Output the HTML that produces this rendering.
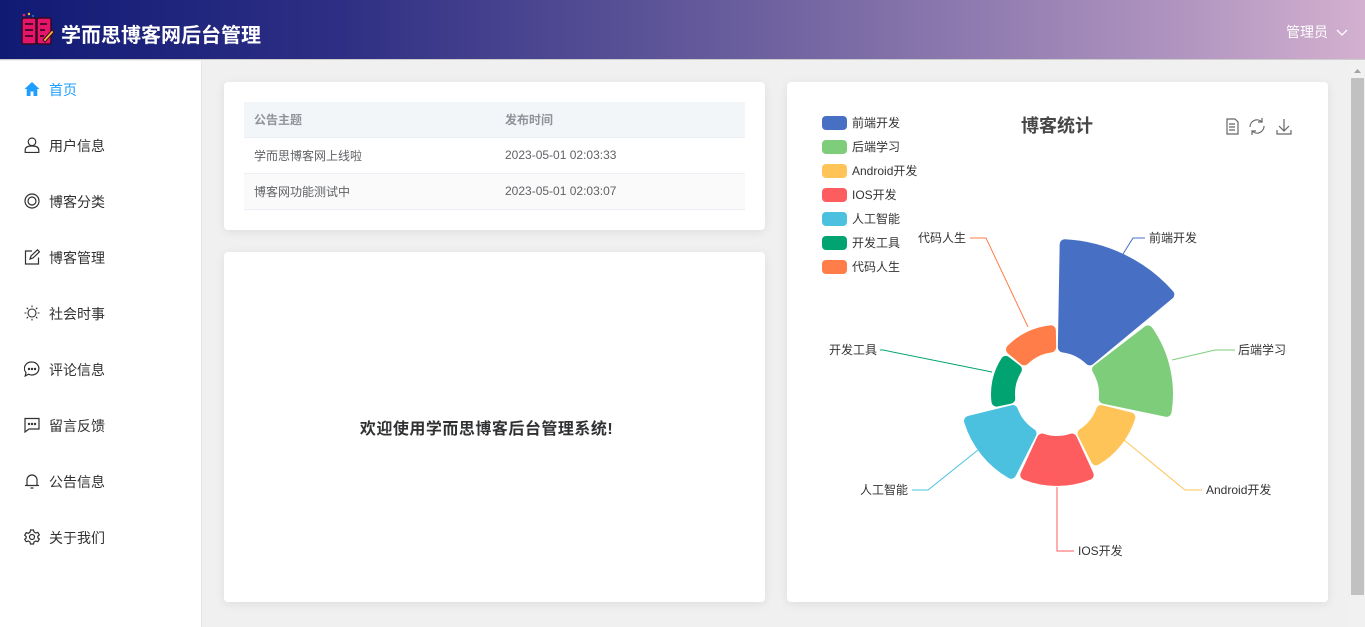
<!DOCTYPE html>
<html><head><meta charset="utf-8"><style>
*{margin:0;padding:0;box-sizing:border-box}
body{width:1365px;height:627px;overflow:hidden;background:#f0f0f0;font-family:"Liberation Sans","Noto Sans CJK SC",sans-serif;position:relative}
.hdr{position:absolute;left:0;top:0;width:1365px;height:60px;background:linear-gradient(90deg,#101a74 0%,#2e2f84 25%,#6b5f9e 55%,#ad92be 85%,#d3b0cf 100%);border-bottom:1px solid #ccc}
.title{position:absolute;left:61px;top:19px;color:#fff;font-size:20px;font-weight:bold;letter-spacing:0}
.admin{position:absolute;left:1286px;top:22px;color:#fff;font-size:14px}
.side{position:absolute;left:0;top:61px;width:202px;height:566px;background:#fff;border-right:1px solid #e6e6e6}
.it{position:absolute;left:0;width:202px;height:20px;font-size:14px;color:#303133}
.it svg{position:absolute;left:24px;top:1px}
.it span{position:absolute;left:49px;top:0px}
.card{position:absolute;background:#fff;border-radius:4px;box-shadow:0 2px 10px rgba(0,0,0,.08)}
table{position:absolute;left:20px;top:20px;width:501px;border-collapse:collapse;font-size:12px;color:#606266}
td,th{height:36px;padding-left:10px;text-align:left;border-bottom:1px solid #ebeef5;font-weight:normal}
th{background:#f3f6f9;color:#909399;height:35px;font-weight:bold}
.sb{position:absolute;left:1350px;top:61px;width:15px;height:566px;background:#f1f1f1}
.sb div{position:absolute;left:1px;top:17px;width:13px;height:517px;background:#c1c1c1}
</style></head><body>
<div class="hdr">
<svg style="position:absolute;left:20px;top:12px" width="36" height="36" viewBox="0 0 36 36">
<circle cx="4" cy="3" r="1.3" fill="#e91e63"/><circle cx="9" cy="2" r="1.2" fill="#fbc02d"/><circle cx="13" cy="4" r="1.2" fill="#1565c0"/>
<rect x="2" y="6" width="14" height="26" rx="2" fill="#e5156b" stroke="#3a0a20" stroke-width="1.5"/>
<rect x="17" y="6" width="14" height="26" rx="2" fill="#e5156b" stroke="#3a0a20" stroke-width="1.5"/>
<path d="M5 12h8M5 18h8M5 24h8M20 12h7M20 18h5M20 24h4" stroke="#3a0a20" stroke-width="1.8"/>
<path d="M23 28l9-10 2 2-9 10z" fill="#f6b73c" stroke="#3a0a20" stroke-width="1"/></svg>
<div class="title">学而思博客网后台管理</div>
<div class="admin">管理员 <svg width="12" height="8" viewBox="0 0 12 8" style="margin-left:4px"><path d="M1 1l5 5 5-5" fill="none" stroke="#fff" stroke-width="1.3"/></svg></div>
</div>
<div class="side">
<div class="it" style="top:19px;color:#1e9fff"><svg width="16" height="16" viewBox="0 0 16 16"><path d="M8 1L0.5 8h2.2v7h3.8v-4.5h3v4.5h3.8V8h2.2z" fill="#1e9fff"/></svg><span>首页</span></div>
<div class="it" style="top:75px"><svg width="16" height="16" viewBox="0 0 16 16" fill="none" stroke="#303133" stroke-width="1.2"><circle cx="8" cy="4.8" r="3.8"/><path d="M1.2 15.5v-2.5c0-2.5 2.5-4 6.8-4s6.8 1.5 6.8 4v2.5z"/></svg><span>用户信息</span></div>
<div class="it" style="top:131px"><svg width="16" height="16" viewBox="0 0 16 16" fill="none" stroke="#303133" stroke-width="1.2"><circle cx="8" cy="8" r="7"/><circle cx="8" cy="8" r="4"/></svg><span>博客分类</span></div>
<div class="it" style="top:187px"><svg width="16" height="16" viewBox="0 0 16 16" fill="none" stroke="#303133" stroke-width="1.2"><path d="M8 2H1.5v13h13V8.5"/><path d="M6 10l1-3 6.5-6.2 2 2L9 9z"/></svg><span>博客管理</span></div>
<div class="it" style="top:243px"><svg width="16" height="16" viewBox="0 0 16 16" fill="none" stroke="#303133" stroke-width="1.1"><circle cx="8" cy="8" r="4"/><path d="M8 0.5v1.8M8 13.7v1.8M0.5 8h1.8M13.7 8h1.8M2.7 2.7l1.3 1.3M12 12l1.3 1.3M2.7 13.3L4 12M12 4l1.3-1.3"/></svg><span>社会时事</span></div>
<div class="it" style="top:299px"><svg width="16" height="16" viewBox="0 0 16 16" fill="none" stroke="#303133" stroke-width="1.2"><path d="M8 1a7 6.5 0 1 1-3.5 12.2L1.2 15l0.8-3.4A7 6.5 0 0 1 8 1z"/><circle cx="5" cy="8" r=".6" fill="#303133"/><circle cx="8" cy="8" r=".6" fill="#303133"/><circle cx="11" cy="8" r=".6" fill="#303133"/></svg><span>评论信息</span></div>
<div class="it" style="top:355px"><svg width="16" height="16" viewBox="0 0 16 16" fill="none" stroke="#303133" stroke-width="1.2"><path d="M1 1.5h14v10.5H5l-4 3z"/><circle cx="5" cy="7" r=".6" fill="#303133"/><circle cx="8" cy="7" r=".6" fill="#303133"/><circle cx="11" cy="7" r=".6" fill="#303133"/></svg><span>留言反馈</span></div>
<div class="it" style="top:411px"><svg width="16" height="16" viewBox="0 0 16 16" fill="none" stroke="#303133" stroke-width="1.2"><path d="M3 12.5V7a5 5 0 0 1 10 0v5.5zM1 12.5h14M6.5 15h3"/></svg><span>公告信息</span></div>
<div class="it" style="top:467px"><svg width="16" height="16" viewBox="0 0 16 16" fill="none" stroke="#303133" stroke-width="1.2"><path d="M6.5 1h3l.5 2 1.8 1 2-.7 1.5 2.6-1.5 1.4v1.4l1.5 1.4-1.5 2.6-2-.7-1.8 1-.5 2h-3l-.5-2-1.8-1-2 .7L.7 10.4l1.5-1.4V7.6L.7 6.2l1.5-2.6 2 .7 1.8-1z"/><circle cx="8" cy="8" r="2.5"/></svg><span>关于我们</span></div>
</div>

<div class="card" style="left:224px;top:82px;width:541px;height:148px">
<table><tr><th>公告主题</th><th style="width:250px">发布时间</th></tr>
<tr><td>学而思博客网上线啦</td><td>2023-05-01 02:03:33</td></tr>
<tr style="background:#fafafa"><td>博客网功能测试中</td><td>2023-05-01 02:03:07</td></tr></table>
</div>
<div class="card" style="left:224px;top:252px;width:541px;height:350px">
<div style="position:absolute;left:-8px;width:541px;top:163px;text-align:center;font-size:16px;font-weight:bold;color:#303133;letter-spacing:0.5px">欢迎使用学而思博客后台管理系统!</div>
</div>
<div class="card" style="left:787px;top:82px;width:541px;height:520px"></div>

<svg id="ch" style="position:absolute;left:0;top:0" width="1365" height="627" font-family="Liberation Sans, Noto Sans CJK SC, sans-serif" font-size="12">
<text x="1057" y="132" text-anchor="middle" font-size="18" font-weight="bold" fill="#464646">博客统计</text>
<g fill="none" stroke="#666" stroke-width="1.2">
<path d="M1227 119h8l3 3v12h-11z M1229 124h6M1229 127h6M1229 130h6"/>
<path d="M1250 127a7 7 0 0 1 12-5M1264 126a7 7 0 0 1-12 5M1262 118v4h-4M1252 135v-4h4"/>
<path d="M1284 119v12M1279 126l5 5 5-5M1277 130v4h14v-4"/>
</g>
<g id="leg"></g>
<g id="pie"></g>
</svg>
<div class="sb"><svg width="15" height="15" style="position:absolute;top:2px"><path d="M4 10h7L7.5 6z" fill="#a3a3a3"/></svg><div></div></div>
<script>
var cx=1057,cy=394,ri=42;
var d=[["前端开发","#4770c5",155],["后端学习","#7ecd7a",116],["Android开发","#fec458",82],["IOS开发","#fe5d5f",92],["人工智能","#4bc1df",97],["开发工具","#01a470",66],["代码人生","#fe7d48",69]];
var ns="http://www.w3.org/2000/svg",pie=document.getElementById("pie"),leg=document.getElementById("leg");
function pt(r,a){return [cx+r*Math.sin(a),cy-r*Math.cos(a)];}
var step=2*Math.PI/7,pad=0.018,s=5;
d.forEach(function(e,i){
 var a0=i*step+pad,a1=(i+1)*step-pad,r0=ri+s,r1=e[2]-s;
 var b0=a0+s/r0,b1=a1-s/r0,c0=a0+s/r1,c1=a1-s/r1;
 var p1=pt(r0,b0),p2=pt(r1,c0),p3=pt(r1,c1),p4=pt(r0,b1);
 var p=document.createElementNS(ns,"path");
 p.setAttribute("d","M"+p1+"L"+p2+"A"+r1+" "+r1+" 0 0 1 "+p3+"L"+p4+"A"+r0+" "+r0+" 0 0 0 "+p1+"Z");
 p.setAttribute("fill",e[1]);p.setAttribute("stroke",e[1]);p.setAttribute("stroke-width",2*s);p.setAttribute("stroke-linejoin","round");
 pie.appendChild(p);
 var y=123+i*24;
 var r=document.createElementNS(ns,"rect");r.setAttribute("x",822);r.setAttribute("y",y-7);r.setAttribute("width",25);r.setAttribute("height",14);r.setAttribute("rx",4);r.setAttribute("fill",e[1]);leg.appendChild(r);
 var t=document.createElementNS(ns,"text");t.setAttribute("x",852);t.setAttribute("y",y+4);t.setAttribute("fill","#333");t.textContent=e[0];leg.appendChild(t);
});
var L=[[0,"1123,254 1133,238 1145,238",1149,238,"start"],[1,"1172,360 1215,350 1235,350",1238,350,"start"],[2,"1124,440 1185,490 1202,490",1206,490,"start"],[3,"1057,487 1057,551 1074,551",1078,551,"start"],[4,"978,450 928,490 912,490",908,490,"end"],[5,"992,372 883,350 880,350",877,350,"end"],[6,"1028,327 986,238 970,238",966,238,"end"]];
L.forEach(function(l){var e=d[l[0]];
 var p=document.createElementNS(ns,"polyline");p.setAttribute("points",l[1]);p.setAttribute("fill","none");p.setAttribute("stroke",e[1]);pie.appendChild(p);
 var t=document.createElementNS(ns,"text");t.setAttribute("x",l[2]);t.setAttribute("y",l[3]+4);t.setAttribute("text-anchor",l[4]);t.setAttribute("fill","#333");t.textContent=e[0];pie.appendChild(t);});
</script>
</body></html>
